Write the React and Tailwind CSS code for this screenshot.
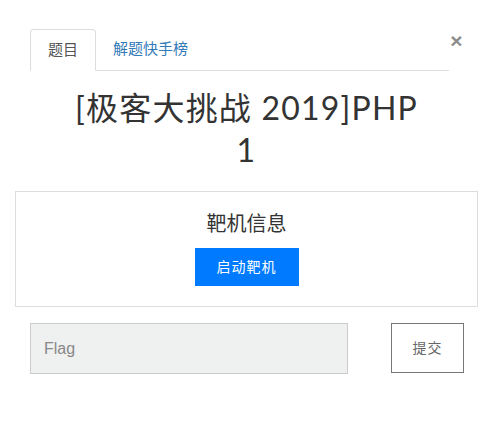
export default function App() {
  return (
    <div className="w-[493px] min-h-[423px] bg-white px-[15px] pt-[29px] font-['Liberation_Sans','Noto_Sans_CJK_SC',sans-serif] text-[#333]">
      {/* tabs */}
      <div className="flex items-start pl-[15px] pr-[15px]">
        <ul className="flex flex-1 border-b border-[#ddd]">
          <li className="-mb-px rounded-t-[4px] border border-[#ddd] border-b-transparent bg-white px-[17px] py-[10px] text-[15px] leading-[20px] text-[#555]">
            题目
          </li>
          <li className="px-[17px] py-[10px] text-[15px] leading-[20px] text-[#337ab7]">
            解题快手榜
          </li>
        </ul>
        <button className="mt-[1px] ml-px w-[13px] text-[21px] font-bold leading-[21px] text-[#8c8c8c]">
          ×
        </button>
      </div>

      {/* title */}
      <h1 className="mt-[16px] text-center font-['Lato','Noto_Sans_CJK_SC',sans-serif] text-[32px] leading-[42px] tracking-[1.2px] text-[#333]">
        [极客大挑战 2019]PHP
        <br />1
      </h1>

      {/* target info */}
      <div className="mt-[20px] flex flex-col items-center border border-[#ddd] pt-[18px] pb-[20px]">
        <h3 className="text-[20px] leading-[28px] text-[#333]">靶机信息</h3>
        <button className="mt-[10px] h-[38px] w-[104px] bg-[#007bff] text-[14px] tracking-[1px] text-white">
          启动靶机
        </button>
      </div>

      {/* flag form */}
      <div className="mt-[16px] flex items-start pl-[15px] pr-[14px]">
        <input
          type="text"
          placeholder="Flag"
          className="h-[51px] w-[318px] border border-[#ccc] bg-[#eff0f0] px-[13px] text-[16px] text-[#555] placeholder:text-[#888] focus:outline-none"
        />
        <button className="ml-auto h-[50px] w-[73px] border border-[#777] bg-white text-[14px] tracking-[1px] text-[#666]">
          提交
        </button>
      </div>
    </div>
  );
}
